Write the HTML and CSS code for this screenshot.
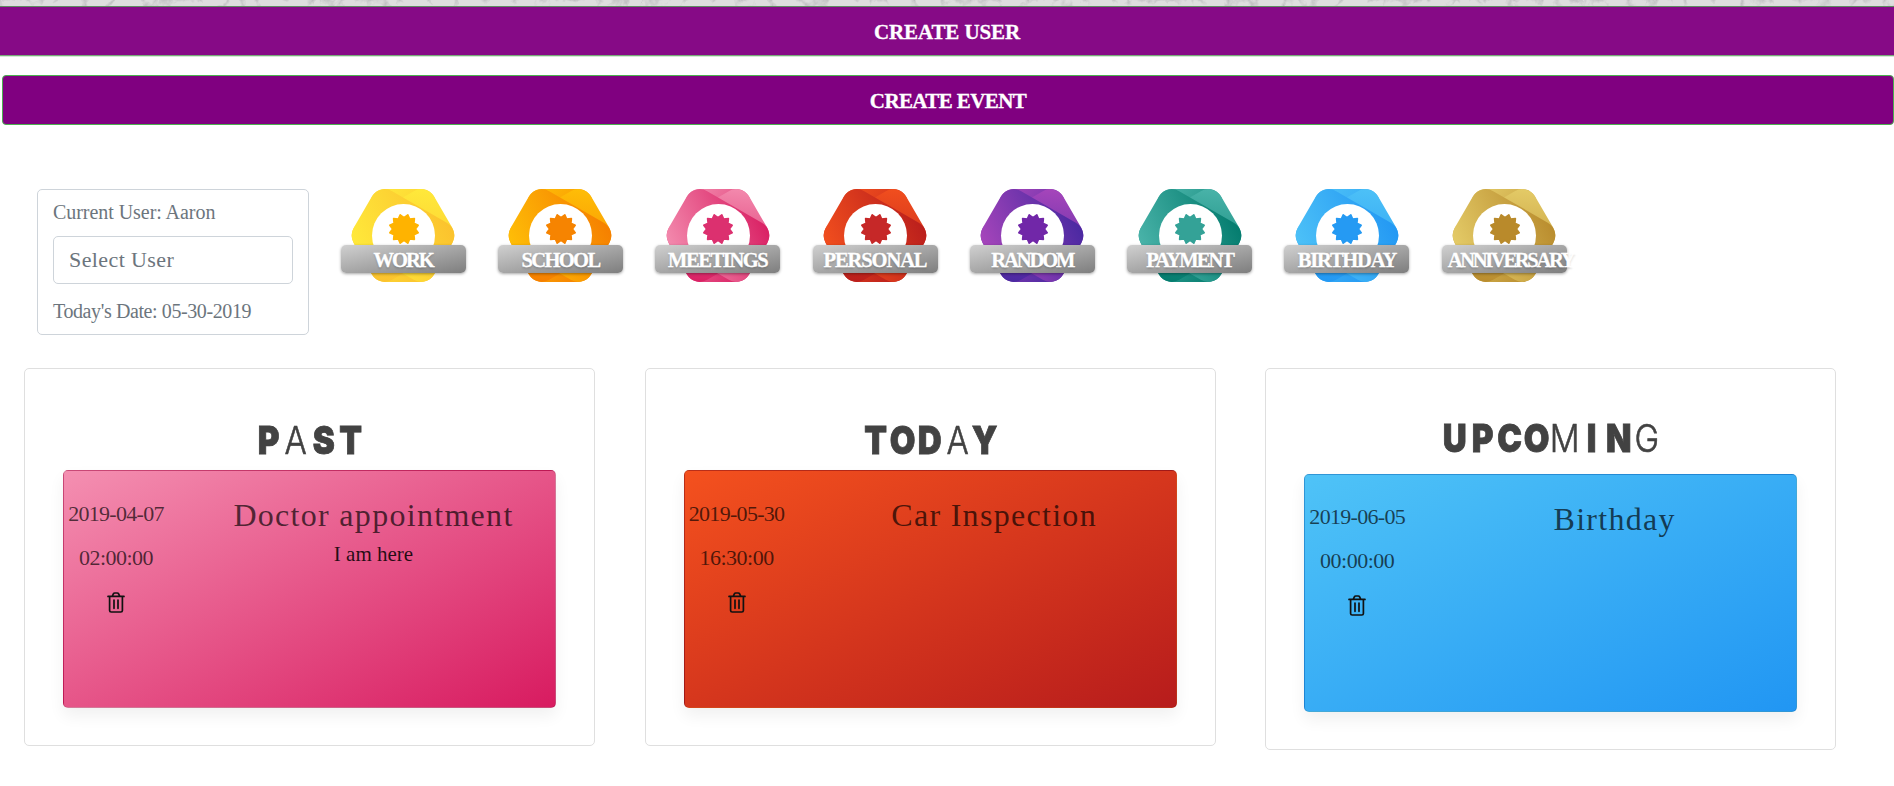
FILE: index.html
```html
<!DOCTYPE html>
<html lang="en">
<head>
<meta charset="utf-8">
<title>Events</title>
<link rel="stylesheet" href="styles.css">
</head>
<body>
<svg class="defs" width="0" height="0" aria-hidden="true">
  <symbol id="seal" viewBox="-16 -16 32 32">
    <path stroke-width="1.6" stroke-linejoin="round" stroke="currentColor" fill="currentColor" d="M3.8-14.2 5.7-9.9 10.4-10.4 9.9-5.7 14.2-3.8 11.4 0 14.2 3.8 9.9 5.7 10.4 10.4 5.7 9.9 3.8 14.2 0 11.4-3.8 14.2-5.7 9.9-10.4 10.4-9.9 5.7-14.2 3.8-11.4 0-14.2-3.8-9.9-5.7-10.4-10.4-5.7-9.9-3.8-14.2 0-11.4Z"/>
  </symbol>
  <symbol id="trash" viewBox="0 0 18 21">
    <path fill="none" stroke="currentColor" stroke-width="1.7" stroke-linejoin="round" stroke-linecap="round" d="M1 4.4H17M2.6 4.4V18.4Q2.6 20 4.2 20H13.8Q15.4 20 15.4 18.4V4.4M5.3 4.2 6.3 2Q6.8 1 7.8 1H10.2Q11.2 1 11.7 2L12.7 4.2M7 8V16.3M11 8V16.3"/>
  </symbol>
</svg>
<div class="marble">
  <svg width="1894" height="6" preserveAspectRatio="none" aria-hidden="true">
    <filter id="veins" x="0" y="0" width="100%" height="100%">
      <feTurbulence type="turbulence" baseFrequency="0.035 0.03" numOctaves="4" seed="8"/>
      <feColorMatrix values="0 0 0 0 .5  0 0 0 0 .5  0 0 0 0 .51  -4 0 0 0 .95"/>
    </filter>
    <rect width="1894" height="6" filter="url(#veins)"/>
  </svg>
</div>
<button class="bar bar-user">CREATE USER</button>
<button class="bar bar-event">CREATE EVENT</button>

<div class="top">
  <section class="user">
    <div class="current">Current User: Aaron</div>
    <div class="select">Select User</div>
    <div class="today">Today's Date: 05-30-2019</div>
  </section>
  <div class="badges">
    <div class="cell"><div class="badge yellow"><div class="circle"><svg><use href="#seal"/></svg></div><div class="ribbon">WORK</div></div></div>
    <div class="cell"><div class="badge orange"><div class="circle"><svg><use href="#seal"/></svg></div><div class="ribbon">SCHOOL</div></div></div>
    <div class="cell"><div class="badge pink"><div class="circle"><svg><use href="#seal"/></svg></div><div class="ribbon">MEETINGS</div></div></div>
    <div class="cell"><div class="badge red"><div class="circle"><svg><use href="#seal"/></svg></div><div class="ribbon">PERSONAL</div></div></div>
    <div class="cell"><div class="badge purple"><div class="circle"><svg><use href="#seal"/></svg></div><div class="ribbon">RANDOM</div></div></div>
    <div class="cell"><div class="badge teal"><div class="circle"><svg><use href="#seal"/></svg></div><div class="ribbon">PAYMENT</div></div></div>
    <div class="cell"><div class="badge blue"><div class="circle"><svg><use href="#seal"/></svg></div><div class="ribbon">BIRTHDAY</div></div></div>
    <div class="cell"><div class="badge gold"><div class="circle"><svg><use href="#seal"/></svg></div><div class="ribbon">ANNIVERSARY</div></div></div>
  </div>
</div>

<main class="columns">
  <section class="panel">
    <h2 class="heading"><span>P</span><span class="thin">A</span><span>S</span><span>T</span></h2>
    <article class="event pink">
      <div class="when"><div>2019-04-07</div><div class="time">02:00:00</div><svg class="trash"><use href="#trash"/></svg></div>
      <div class="what"><h3>Doctor appointment</h3><p>I am here</p></div>
    </article>
  </section>
  <section class="panel">
    <h2 class="heading"><span>T</span><span>O</span><span>D</span><span class="thin">A</span><span>Y</span></h2>
    <article class="event red">
      <div class="when"><div>2019-05-30</div><div class="time">16:30:00</div><svg class="trash"><use href="#trash"/></svg></div>
      <div class="what"><h3>Car Inspection</h3></div>
    </article>
  </section>
  <section class="panel upcoming">
    <h2 class="heading"><span>U</span><span>P</span><span>C</span><span>O</span><span class="thin">M</span><span>I</span><span>N</span><span class="thin">G</span></h2>
    <article class="event blue">
      <div class="when"><div>2019-06-05</div><div class="time">00:00:00</div><svg class="trash"><use href="#trash"/></svg></div>
      <div class="what"><h3>Birthday</h3></div>
    </article>
  </section>
</main>
</body>
</html>
```
FILE: styles.css
```css
* { box-sizing: border-box; }
html { overflow: hidden; }
body {
  margin: 0;
  background: #fff;
  font-family: "Liberation Serif", serif;
  color: #6c757d;
  overflow: hidden;
}
.defs { position: absolute; }
.marble { height: 6px; background: #dedede; overflow: hidden; }
.marble svg { display: block; }

.bar {
  display: block;
  height: 50px;
  padding: 0;
  border: 1px solid #4caf50;
  background: #800080;
  color: #fff;
  font: bold 21px/48px "Liberation Serif", serif;
  -webkit-text-stroke: .3px #fff;
}
.bar-user {
  width: 100%;
  background: #860a86;
  border-width: 1px 0;
  border-color: #5f8a62 transparent #76a878;
  letter-spacing: -.1px;
  padding-top: 1px;
  box-shadow: 0 1px 0 #d3ead4;
}
.bar-event {
  width: 1892px;
  margin: 19px 0 0 2px;
  padding-top: 1px;
  border-radius: 4px;
  letter-spacing: -.6px;
}

.top { display: flex; height: 179px; margin: 64px 0 0 37px; }
.user {
  width: 272px;
  height: 146px;
  border: 1px solid #ced4da;
  border-radius: 5px;
  padding: 10px 15px;
  font-size: 20px;
  line-height: 24px;
}
.current { letter-spacing: -.05px; }
.select {
  height: 48px;
  margin: 12px 0 15px;
  padding-left: 15px;
  border: 1px solid #ced4da;
  border-radius: 5px;
  font-size: 22px;
  line-height: 46px;
  letter-spacing: .4px;
}
.today { letter-spacing: -.4px; }

.badges { display: flex; margin-left: 15.5px; }
.cell { width: 157.3px; display: flex; justify-content: center; }
.badge {
  position: relative;
  width: 66px;
  height: 93px;
  border-radius: 15px;
  background: linear-gradient(to bottom right, var(--from), var(--to));
  color: var(--seal);
}
.badge::before, .badge::after {
  content: "";
  position: absolute;
  inset: 0;
  border-radius: inherit;
  background: inherit;
}
.badge::before { transform: rotate(60deg); }
.badge::after { transform: rotate(-60deg); }
.circle {
  position: absolute;
  left: 2px;
  top: 15px;
  z-index: 1;
  width: 63px;
  height: 63px;
  border-radius: 50%;
  background: #fff;
}
.circle svg { display: block; width: 32px; height: 32px; margin: 9px 0 0 15.5px; }
.ribbon {
  position: absolute;
  left: -29.5px;
  top: 56px;
  z-index: 2;
  width: 125px;
  height: 28px;
  padding-left: 6px;
  padding-right: 6px;
  border-radius: 5px;
  background: linear-gradient(to bottom right, #d0d0d0, #7e7e7e);
  box-shadow: 0 1px 3px rgba(0, 0, 0, .35);
  color: #fff;
  font-size: 20.5px;
  font-weight: bold;
  line-height: 31px;
  text-align: center;
  white-space: nowrap;
  letter-spacing: var(--track);
  -webkit-text-stroke: .3px #fff;
  text-shadow: 0 2px 2px rgba(0, 0, 0, .15);
}
.yellow { --from: #ffeb3b; --to: #fbc02d; --seal: #ffb300; --track: -2px; }
.orange { --from: #ffc107; --to: #f57c00; --seal: #f68401; --track: -1.6px; }
.pink { --from: #f48fb1; --to: #d81b60; --seal: #dc306f; --track: -1.4px; }
.red { --from: #f4511e; --to: #b71c1c; --seal: #c62828; --track: -1.1px; }
.purple { --from: #ab47bc; --to: #4527a0; --seal: #7127a8; --track: -2.1px; }
.teal { --from: #4db6ac; --to: #00796b; --seal: #34a297; --track: -1.9px; }
.blue { --from: #4fc3f7; --to: #2196f3; --seal: #259af3; --track: -1.2px; }
.gold { --from: #e6ce6a; --to: #b7892b; --seal: #b98a2b; --track: -2.3px; }

.columns { display: grid; grid-template-columns: repeat(3, 571px); gap: 49.6px; padding-left: 24px; align-items: start; }
.panel {
  height: 378px;
  padding: 50px 38px 0;
  border: 1px solid #dfdfdf;
  border-radius: 5px;
}
.upcoming { height: 382px; padding-top: 48px; }
.heading {
  display: flex;
  justify-content: center;
  height: 42px;
  margin: 0 0 9px;
  color: #424242;
  font: 900 38.5px/42px Inter, sans-serif;
}
.heading span { display: flex; justify-content: center; width: 27.4px; transform: scaleX(.86); -webkit-text-stroke: .8px #424242; }
.heading .thin { font-weight: 300; -webkit-text-stroke: .6px #424242; }
.upcoming .heading { margin-bottom: 14.6px; }
.event {
  display: grid;
  grid-template-columns: 104px 1fr;
  column-gap: 24px;
  height: 238px;
  border: 1px solid rgba(0, 0, 0, .125);
  border-radius: 5px;
  background: linear-gradient(to bottom right, var(--from), var(--to));
  box-shadow: 0 8px 16px rgba(0, 0, 0, .06);
  text-align: center;
  color: rgba(0, 0, 0, .68);
}
.when { padding-top: 30px; font-size: 22px; line-height: 26px; letter-spacing: -.7px; }
.time { margin: 18px 0 21px; letter-spacing: -.5px; }
.trash { display: block; width: 18px; height: 21px; margin: 0 auto; color: #111; }
.upcoming .when { padding-top: 29px; }
.what h3 { margin: 25px 0 0; font-weight: normal; font-size: 32px; line-height: 38px; letter-spacing: 1.3px; }
.what p { margin: 8px 0 0; font-size: 21px; line-height: 24px; color: rgba(0, 0, 0, .85); }
```
